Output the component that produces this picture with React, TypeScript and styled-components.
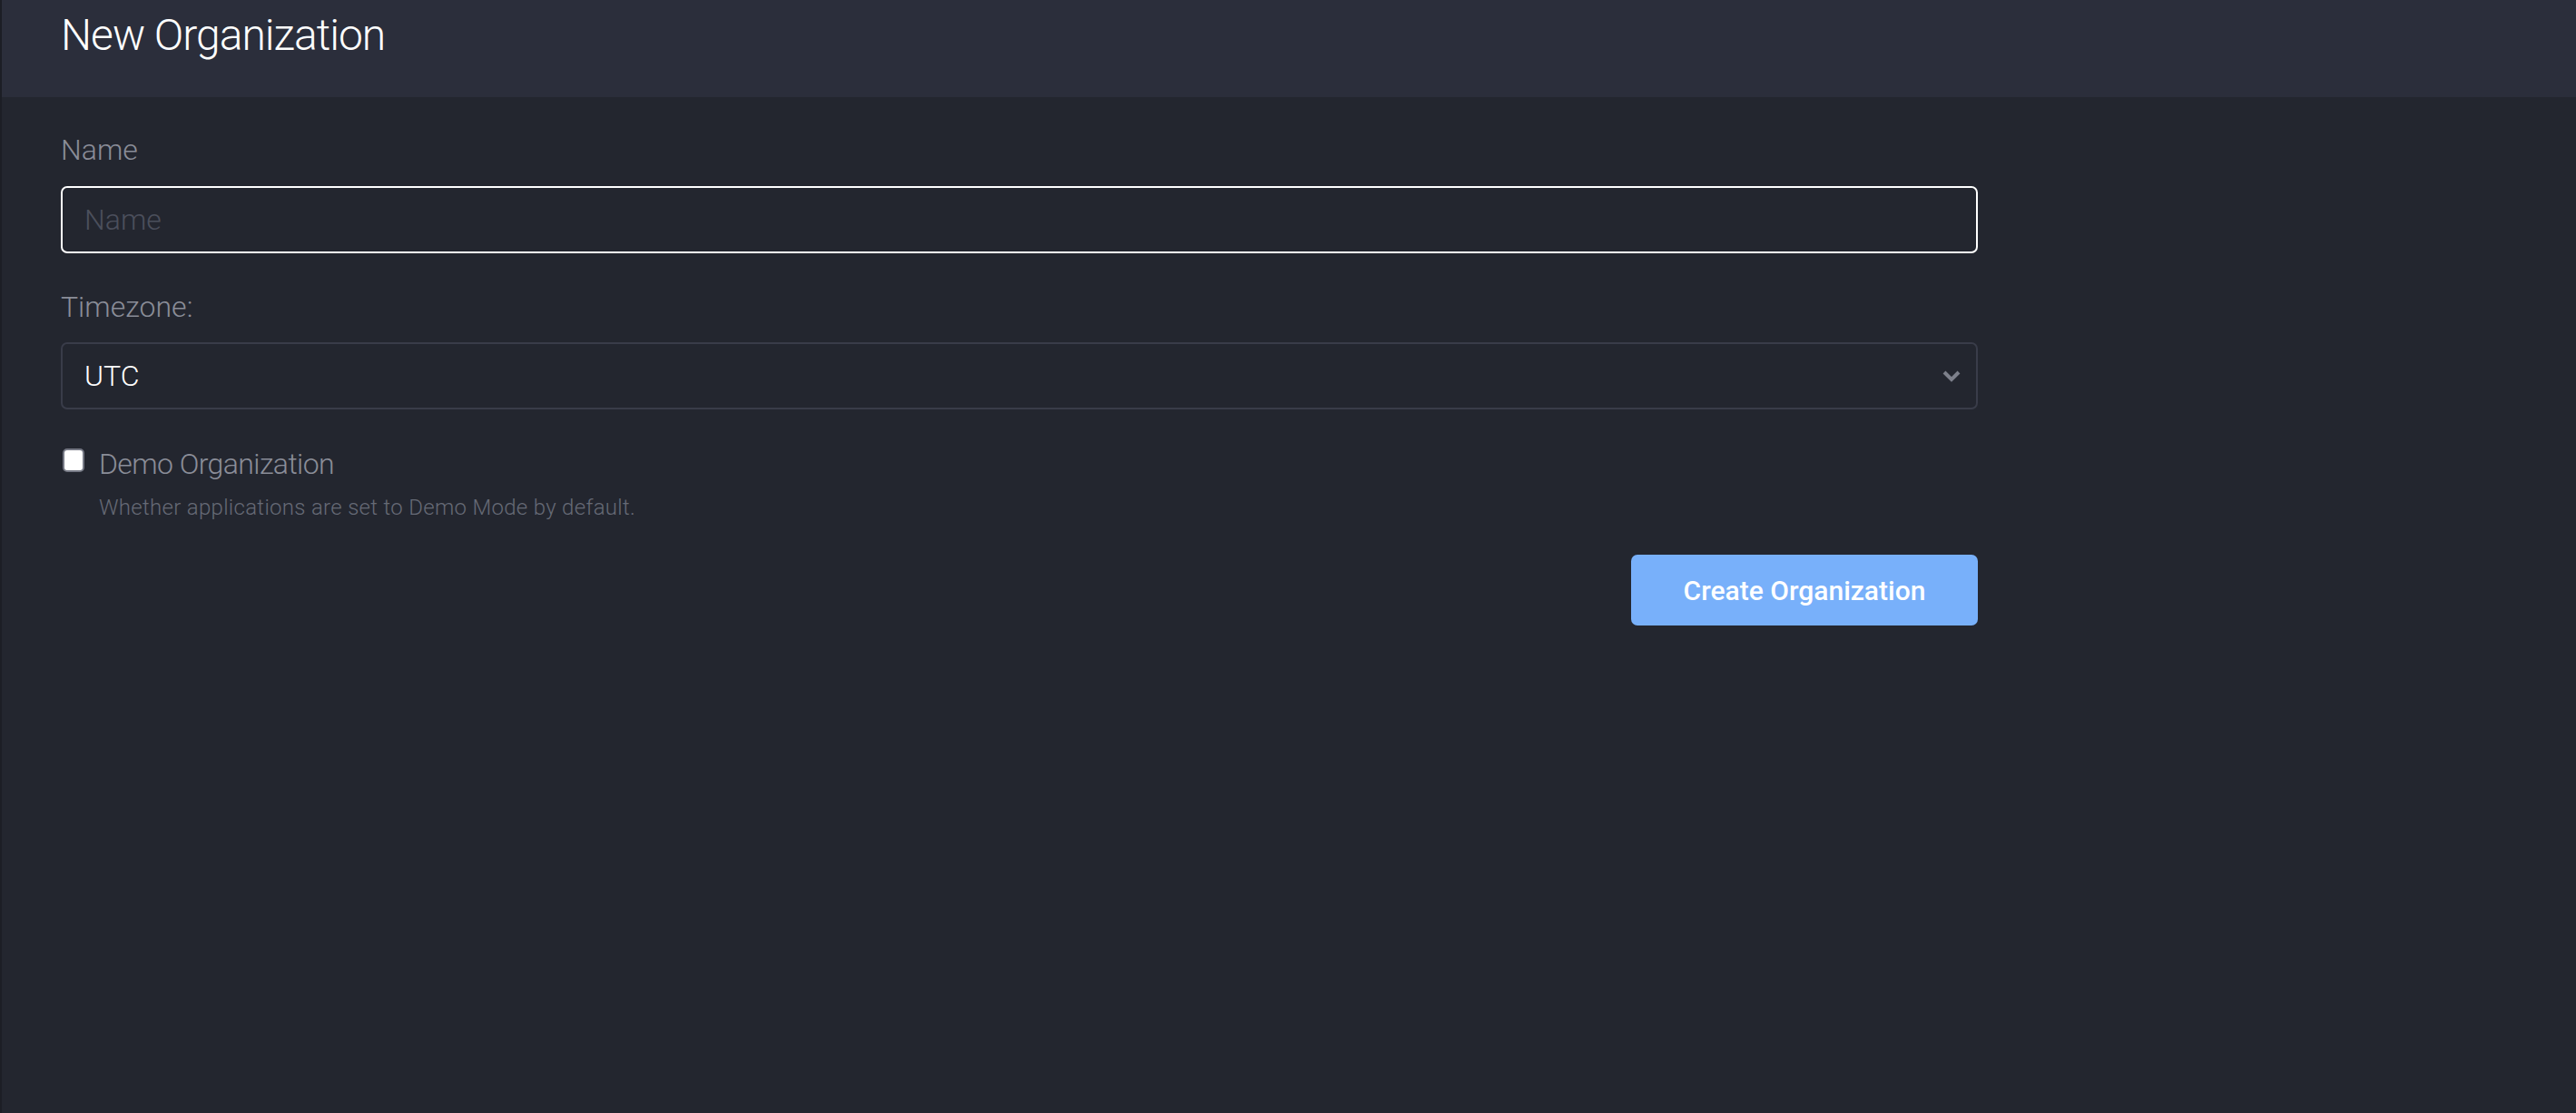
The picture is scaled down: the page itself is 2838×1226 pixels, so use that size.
import React, { useState } from "react";
import styled, { createGlobalStyle } from "styled-components";

const GlobalStyle = createGlobalStyle`
  html, body {
    margin: 0;
    padding: 0;
    background: #23262f;
  }
  * {
    box-sizing: border-box;
  }
`;

const Page = styled.div`
  min-height: 100vh;
  background: #23262f;
  border-left: 2px solid #1c1e25;
  font-family: Roboto, "Noto Sans", sans-serif;
`;

const Header = styled.header`
  height: 107px;
  background: #2b2e3b;
  padding: 9px 0 0 65px;
`;

const Title = styled.h1`
  margin: 0;
  font-size: 48px;
  font-weight: 300;
  line-height: 60px;
  letter-spacing: -1px;
  color: #ffffff;
`;

const Form = styled.form`
  width: 2177px;
  padding: 34px 0 0 65px;
  display: flex;
  flex-direction: column;
`;

const Label = styled.label<{ $gap?: number }>`
  display: block;
  margin-top: ${(p) => p.$gap ?? 0}px;
  font-size: 32px;
  line-height: 48px;
  font-weight: 300;
  color: #8a8d98;
`;

const Field = styled.input`
  margin-top: 16px;
  height: 74px;
  width: 100%;
  padding: 0 24px;
  background: #23262f;
  border: 2px solid #ffffff;
  border-radius: 7px;
  outline: none;
  font-family: inherit;
  font-size: 32px;
  font-weight: 300;
  color: #ffffff;

  &::placeholder {
    color: #4b4f5c;
  }
`;

const SelectWrap = styled.div`
  position: relative;
  margin-top: 15px;
`;

const Select = styled.select`
  appearance: none;
  -webkit-appearance: none;
  display: block;
  height: 74px;
  width: 100%;
  padding: 0 60px 0 24px;
  background: #23262f;
  border: 2px solid #393c49;
  border-radius: 7px;
  outline: none;
  font-family: inherit;
  font-size: 32px;
  font-weight: 300;
  color: #ffffff;
`;

const Chevron = styled.svg`
  position: absolute;
  right: 19px;
  top: 30px;
  width: 20px;
  height: 14px;
  pointer-events: none;
`;

const CheckRow = styled.div`
  margin-top: 36px;
  display: flex;
  align-items: flex-start;
  gap: 16px;
`;

const Check = styled.input`
  appearance: none;
  -webkit-appearance: none;
  margin: 7px 0 0 2px;
  width: 24px;
  height: 26px;
  background: #ffffff;
  border: 2px solid #767985;
  border-radius: 5px;

  &:checked {
    background: #78b0fa;
    border-color: #78b0fa;
  }
`;

const CheckText = styled.div`
  display: flex;
  flex-direction: column;
`;

const CheckLabel = styled.label`
  font-size: 32px;
  line-height: 48px;
  font-weight: 300;
  letter-spacing: -0.6px;
  color: #8a8d98;
`;

const Hint = styled.div`
  margin-top: 6px;
  font-size: 24px;
  line-height: 36px;
  font-weight: 300;
  letter-spacing: 0.3px;
  color: #666a76;
`;

const Actions = styled.div`
  margin-top: 34px;
  display: flex;
  justify-content: flex-end;
`;

const Button = styled.button`
  width: 382px;
  height: 78px;
  border: none;
  border-radius: 7px;
  background: #78b0fa;
  color: #ffffff;
  font-family: inherit;
  font-size: 30px;
  font-weight: 500;
  cursor: pointer;
`;

export default function App() {
  const [name, setName] = useState("");
  const [tz, setTz] = useState("UTC");
  const [demo, setDemo] = useState(false);

  return (
    <Page>
      <GlobalStyle />
      <Header>
        <Title>New Organization</Title>
      </Header>
      <Form onSubmit={(e) => e.preventDefault()}>
        <Label htmlFor="org-name">Name</Label>
        <Field
          id="org-name"
          placeholder="Name"
          value={name}
          onChange={(e) => setName(e.target.value)}
        />
        <Label htmlFor="org-tz" $gap={35}>
          Timezone:
        </Label>
        <SelectWrap>
          <Select id="org-tz" value={tz} onChange={(e) => setTz(e.target.value)}>
            <option value="UTC">UTC</option>
            <option value="Europe/London">Europe/London</option>
            <option value="America/New_York">America/New_York</option>
          </Select>
          <Chevron viewBox="0 0 20 14">
            <polyline
              points="2,3 10,11 18,3"
              fill="none"
              stroke="#7d808b"
              strokeWidth="4"
            />
          </Chevron>
        </SelectWrap>
        <CheckRow>
          <Check
            id="org-demo"
            type="checkbox"
            checked={demo}
            onChange={(e) => setDemo(e.target.checked)}
          />
          <CheckText>
            <CheckLabel htmlFor="org-demo">Demo Organization</CheckLabel>
            <Hint>Whether applications are set to Demo Mode by default.</Hint>
          </CheckText>
        </CheckRow>
        <Actions>
          <Button type="submit">Create Organization</Button>
        </Actions>
      </Form>
    </Page>
  );
}
